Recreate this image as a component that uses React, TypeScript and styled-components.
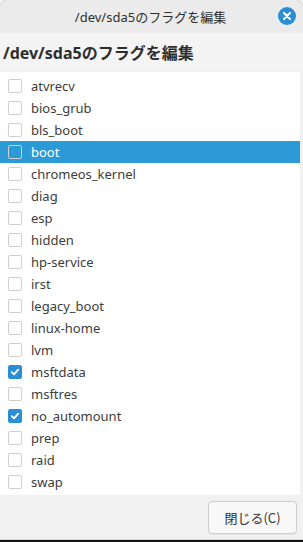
import styled, { createGlobalStyle } from "styled-components";

const GlobalStyle = createGlobalStyle`
    html, body {
        margin: 0;
        padding: 0;
        background: #f2f2f2;
    }
    body {
        font-family: "Noto Sans", "Noto Sans CJK JP", sans-serif;
    }
`;

const flags = [
    {name: "atvrecv", checked: false},
    {name: "bios_grub", checked: false},
    {name: "bls_boot", checked: false},
    {name: "boot", checked: false, selected: true},
    {name: "chromeos_kernel", checked: false},
    {name: "diag", checked: false},
    {name: "esp", checked: false},
    {name: "hidden", checked: false},
    {name: "hp-service", checked: false},
    {name: "irst", checked: false},
    {name: "legacy_boot", checked: false},
    {name: "linux-home", checked: false},
    {name: "lvm", checked: false},
    {name: "msftdata", checked: true},
    {name: "msftres", checked: false},
    {name: "no_automount", checked: true},
    {name: "prep", checked: false},
    {name: "raid", checked: false},
    {name: "swap", checked: false},
];

export default function App() {
    return (
        <>
            <GlobalStyle/>
            <Page>
                <Window>
                    <TitleBar>
                        <TitleText>/dev/sda5のフラグを編集</TitleText>
                        <CloseButton>
                            <svg width="18" height="18" viewBox="0 0 18 18">
                                <circle cx="9" cy="9" r="9" fill="#2a8ed6"/>
                                <path d="M6 6 L12 12 M12 6 L6 12" stroke="#fff" strokeWidth="2.2" strokeLinecap="round"/>
                            </svg>
                        </CloseButton>
                    </TitleBar>
                    <Heading>/dev/sda5のフラグを編集</Heading>
                    <FlagList>
                        {flags.map((f) => (
                            <FlagRow key={f.name} $selected={!!f.selected}>
                                <CheckBox $checked={f.checked}>
                                    {f.checked && (
                                        <svg width="10" height="10" viewBox="0 0 10 10">
                                            <path d="M1.8 5.2 L4 7.4 L8.2 2.6" stroke="#fff" strokeWidth="1.8" fill="none"
                                                  strokeLinecap="round" strokeLinejoin="round"/>
                                        </svg>
                                    )}
                                </CheckBox>
                                <FlagName>{f.name}</FlagName>
                            </FlagRow>
                        ))}
                    </FlagList>
                    <Footer>
                        <Button>閉じる(C)</Button>
                    </Footer>
                </Window>
            </Page>
        </>
    );
}

const Page = styled.div`
    width: 303px;
    height: 542px;
    box-sizing: border-box;
    border-bottom: 3px solid #151515;
`;

const Window = styled.div`
    width: 303px;
    height: 539px;
    background: #f1f1f1;
    border-radius: 9px 9px 0 0;
    box-shadow: 0 0 0 1px #d6d6d6;
    overflow: hidden;
    display: flex;
    flex-direction: column;
    color: #333;
`;

const TitleBar = styled.div`
    height: 33px;
    flex-shrink: 0;
    background: #ebebeb;
    display: flex;
    align-items: center;
    justify-content: center;
    position: relative;
`;

const TitleText = styled.div`
    font-size: 13px;
    color: #2f2f2f;
    margin-left: -2px;
`;

const CloseButton = styled.div`
    position: absolute;
    right: 7px;
    top: 7px;
    width: 18px;
    height: 18px;
    display: flex;
`;

const Heading = styled.div`
    height: 37px;
    flex-shrink: 0;
    background: #f4f4f4;
    font-size: 16px;
    font-weight: bold;
    color: #2d2d2d;
    padding-left: 3px;
    display: flex;
    align-items: center;
    margin-bottom: 2px;
`;

const FlagList = styled.div`
    background: #fff;
    margin-right: 3px;
    padding: 3px 0 2px;
    display: flex;
    flex-direction: column;
`;

const FlagRow = styled.div<{ $selected: boolean }>`
    height: 22px;
    display: flex;
    align-items: center;
    padding-left: 8px;
    background: ${(p) => (p.$selected ? "#2b9ad7" : "transparent")};
    color: ${(p) => (p.$selected ? "#fff" : "#3c3c3c")};
`;

const CheckBox = styled.div<{ $checked: boolean }>`
    width: 12px;
    height: 12px;
    border-radius: 2px;
    border: 1px solid ${(p) => (p.$checked ? "#2a8fd6" : "#cfcfcf")};
    background: ${(p) => (p.$checked ? "#2a8fd6" : "transparent")};
    display: flex;
    align-items: center;
    justify-content: center;
    margin-right: 9px;
    flex-shrink: 0;
`;

const FlagName = styled.span`
    font-size: 13px;
`;

const Footer = styled.div`
    flex: 1;
    display: flex;
    justify-content: flex-end;
    align-items: center;
    padding-right: 6px;
`;

const Button = styled.button`
    width: 89px;
    height: 33px;
    border: 1px solid #cdcdcd;
    border-radius: 4px;
    background: #f8f8f8;
    font-family: "Noto Sans CJK JP", sans-serif;
    font-size: 13px;
    color: #333;
    box-shadow: 0 1px 0 rgba(0, 0, 0, 0.04);
`;
